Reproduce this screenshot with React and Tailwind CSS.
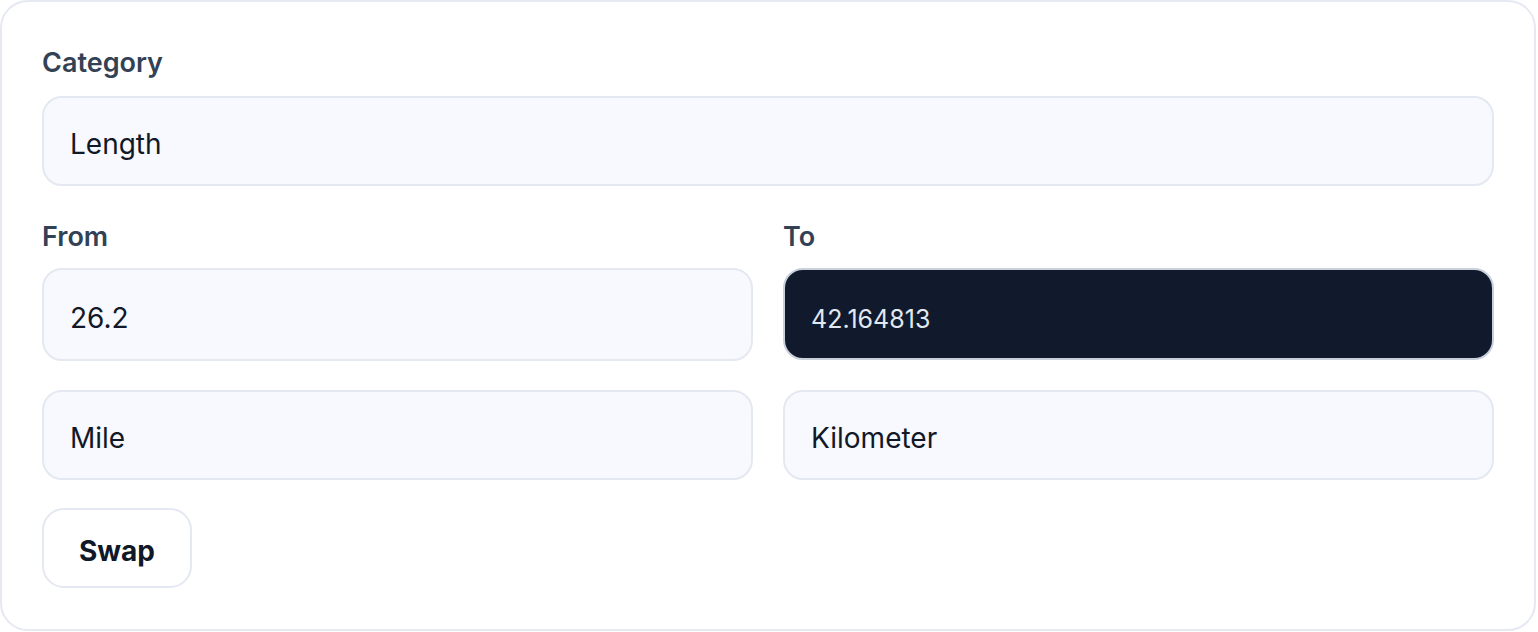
import { useState } from "react"

const inputBox =
    "flex items-center w-full rounded-[20px] border-2 border-[#e4e8f1] bg-[#f7f9fe] px-[26px] pt-[6px] text-[28px] text-[#111827] outline-none"

const labelCls = "block text-[27px] leading-[40px] font-semibold text-[#334155]"

export default function App() {
    const [value, setValue] = useState("26.2")

    return (
        <div className="w-[1538px] h-[632px] bg-white" style={{ fontFamily: "Inter, 'Noto Sans', sans-serif" }}>
            <div className="w-[1536px] h-[631px] rounded-[28px] border-2 border-[#e6e9f2] bg-white px-[40px] pt-[41px]">
                <label className={labelCls}>Category</label>
                <div className={`${inputBox} mt-[13px] h-[90px]`}>Length</div>

                <div className="mt-[31px] grid grid-cols-2 gap-x-[30px]">
                    <div>
                        <label className={labelCls}>From</label>
                        <input
                            value={value}
                            onChange={(e) => setValue(e.target.value)}
                            className={`${inputBox} mt-[11px] h-[93px]`}
                        />
                    </div>
                    <div>
                        <label className={labelCls}>To</label>
                        <div className="mt-[11px] flex h-[92px] items-center rounded-[20px] border-2 border-[#c9d0dc] bg-[#111a2c] px-[26px] pt-[12px] text-[25px] text-[#e2e8f0]">
                            42.164813
                        </div>
                    </div>
                    <div className={`${inputBox} mt-[29px] h-[90px]`}>Mile</div>
                    <div className={`${inputBox} mt-[29px] h-[90px]`}>Kilometer</div>
                </div>

                <button className="mt-[28px] h-[80px] w-[150px] rounded-[22px] border-2 border-[#e4e8f1] bg-white pt-[5px] text-[28px] font-bold text-[#111827]">
                    Swap
                </button>
            </div>
        </div>
    )
}
